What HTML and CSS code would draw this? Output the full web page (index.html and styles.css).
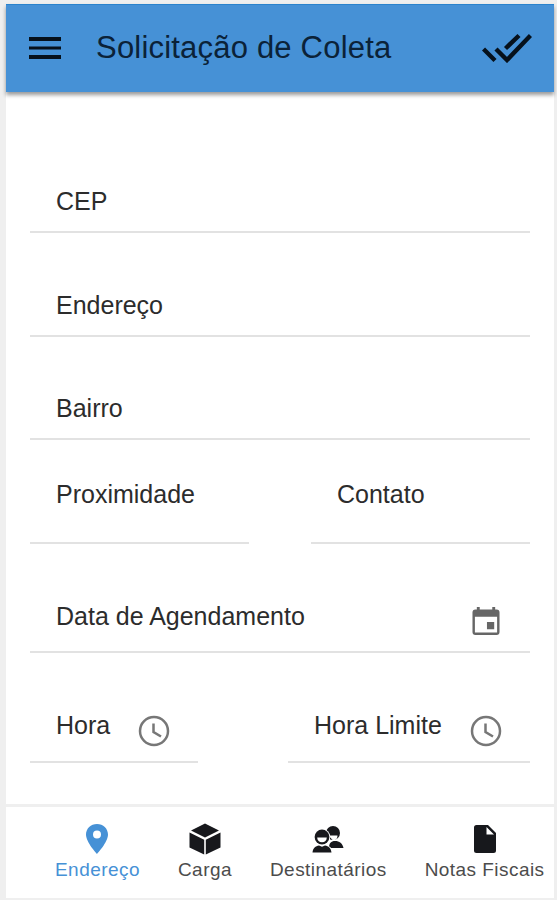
FILE: index.html
```html
<!DOCTYPE html>
<html lang="pt-BR">
<head>
  <meta charset="utf-8">
  <title>Solicitação de Coleta</title>
  <link rel="stylesheet" href="styles.css">
</head>
<body>

<div class="app">
  <header class="toolbar">
    <svg class="menu" width="32" height="22" viewBox="0 0 32 22"><path d="M0 0h32v4H0zM0 9.500h32v3H0zM0 18h32v4H0z" fill="#06111c"/></svg>
    <h1>Solicitação de Coleta</h1>
    <svg class="done" width="50" height="30" viewBox="0 0 50 30"><path d="M1.500 16L13 27.500M14 16L25 27L48.500 2.500M23.500 15.500L37 2.500" fill="none" stroke="#06111c" stroke-width="4.400"/></svg>
  </header>

  <form class="form">
    <div class="field"><label>CEP</label></div>
    <div class="field"><label>Endereço</label></div>
    <div class="field"><label>Bairro</label></div>
    <div class="row halves">
      <div class="field"><label>Proximidade</label></div>
      <div class="field"><label>Contato</label></div>
    </div>
    <div class="field date">
      <label>Data de Agendamento</label>
      <svg width="28" height="28" viewBox="0 0 28 29"><path fill="#666" fill-rule="evenodd" d="M4.500 0h3v2.500h13V0h3v2.500H25a3 3 0 0 1 3 3V26a3 3 0 0 1-3 3H3a3 3 0 0 1-3-3V5.500a3 3 0 0 1 3-3h1.500zM2.500 10v16.500h23V10zM15 15.500h7.500V23H15z"/></svg>
    </div>
    <div class="row times">
      <div class="field">
        <label>Hora</label>
        <svg width="32" height="32" viewBox="0 0 32 32"><g fill="none" stroke="#777" stroke-width="2.500"><circle cx="16" cy="16" r="14"/><path d="M15.500 8.500v8.500l7.500 4.500"/></g></svg>
      </div>
      <div class="field">
        <label>Hora Limite</label>
        <svg width="32" height="32" viewBox="0 0 32 32"><g fill="none" stroke="#777" stroke-width="2.500"><circle cx="16" cy="16" r="14"/><path d="M15.500 8.500v8.500l7.500 4.500"/></g></svg>
      </div>
    </div>
  </form>

  <nav class="tabs">
    <a class="tab active">
      <svg width="32" height="32" viewBox="0 0 32 32"><path fill="#4691d6" fill-rule="evenodd" d="M16 1C9.800 1 5 5.600 5 11.600C5 19.500 16 31 16 31S27 19.500 27 11.600C27 5.600 22.200 1 16 1zM16 7.500a4 4 0 1 1 0 8a4 4 0 0 1 0-8z"/></svg>
      <span>Endereço</span>
    </a>
    <a class="tab">
      <svg width="32" height="32" viewBox="0 0 32 32"><path fill="#17181c" d="M16 .5L30 7.500L16 14.500L2 7.500zM.500 9.500L15.200 16.800V31.500L.500 24.500zM31.500 9.500L16.800 16.800V31.500L31.500 24.500z"/></svg>
      <span>Carga</span>
    </a>
    <a class="tab">
      <svg width="32" height="32" viewBox="0 0 32 32">
        <g fill="#17181c">
          <circle cx="21" cy="10" r="7"/>
          <path d="M17 25c0-5 2-7 6-7c4.500 0 7.500 2.500 8.500 7z"/>
          <path d="M16.500 12.500h9c0 3.500-2 5-4.500 5z" fill="#fff"/>
          <circle cx="10" cy="14" r="8.300" fill="#fff"/>
          <path d="M-.5 30.500c.5-7 5-9 10.500-9S20.500 23.500 21 30.500z" fill="#fff"/>
          <circle cx="10" cy="14" r="7.400"/>
          <path d="M5.200 14.500h9.600c0 3-2 4.800-4.800 4.800S5.200 17.500 5.200 14.500z" fill="#fff"/>
          <path d="M.5 29.500c.5-4.500 3-6.500 6.500-7l3 1.300l3-1.300c3.500.5 6 2.500 6.500 7z"/>
        </g>
      </svg>
      <span>Destinatários</span>
    </a>
    <a class="tab">
      <svg width="32" height="32" viewBox="0 0 32 32"><path fill="#17181c" fill-rule="evenodd" d="M7.500 2H19l8 8v17.500a2.500 2.500 0 0 1-2.500 2.500h-17A2.500 2.500 0 0 1 5 27.500v-23A2.500 2.500 0 0 1 7.500 2zM17.500 4v7.500H25z"/></svg>
      <span>Notas Fiscais</span>
    </a>
  </nav>
</div>

</body>
</html>
```
FILE: styles.css
```css
html, body {
  margin: 0;
  padding: 0;
}

body {
  height: 900px;
  box-sizing: border-box;
  padding: 4px 3px 2px 6px;
  background: #efefef;
  font-family: "Liberation Sans", Arial, sans-serif;
  color: #2c2c2c;
  overflow: hidden;
}

.app {
  display: flex;
  flex-direction: column;
  height: 894px;
  background: #fff;
}

.toolbar {
  display: flex;
  align-items: center;
  height: 88px;
  box-sizing: border-box;
  padding: 0 22px 2px 23px;
  background: #4691d6;
  border-top: 1px solid #2b83cd;
  box-shadow: 0 3px 4px rgba(0, 0, 0, .4);
}

.toolbar h1 {
  margin: 0 auto 0 35px;
  font-size: 31px;
  font-weight: normal;
  letter-spacing: .2px;
  color: #0b2238;
}

.form {
  display: grid;
  grid-template-rows: 141px 104px 103px 104px 109px 110px;
  flex: 1;
  align-content: start;
  padding: 0 24px;
}

.field {
  display: flex;
  align-items: flex-end;
  justify-content: space-between;
  box-sizing: border-box;
  padding: 0 30px 15px 26px;
  border-bottom: 2px solid #e2e2e2;
  font-size: 25px;
  line-height: 30px;
}

.row {
  display: grid;
}

.halves {
  grid-template-columns: 219px 219px;
  justify-content: space-between;
}

.halves .field {
  padding-bottom: 33px;
}

.date {
  padding-bottom: 20px;
}

.date svg {
  margin-bottom: -4px;
}

.times {
  grid-template-columns: 168px 242px;
  justify-content: space-between;
}

.times .field {
  padding: 0 28px 21px 26px;
}

.times svg {
  margin-bottom: -7px;
}

/* bottom tab bar */
.tabs {
  display: flex;
  gap: 38px;
  height: 94px;
  box-sizing: border-box;
  padding: 16px 0 0 49px;
  border-top: 3px solid #efefef;
}

.tab {
  display: flex;
  flex-direction: column;
  align-items: center;
  font-size: 19px;
  line-height: 24px;
  letter-spacing: .45px;
  white-space: nowrap;
  color: #4c4c4c;
}

.tab span {
  margin-top: 3px;
}

.active {
  color: #4691d6;
}
```
